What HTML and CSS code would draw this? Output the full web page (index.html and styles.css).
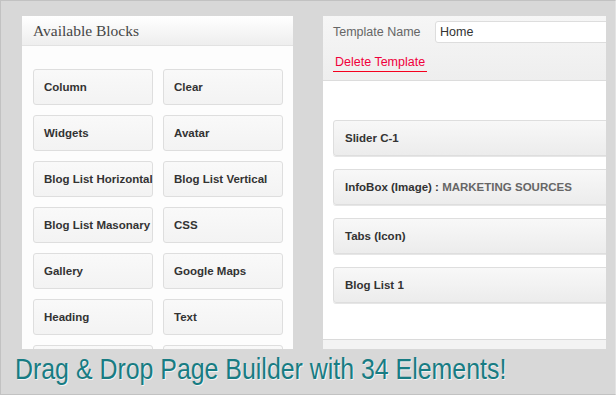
FILE: index.html
```html
<!DOCTYPE html>
<html lang="en">
<head>
  <meta charset="UTF-8">
  <title>Page Builder</title>
  <link rel="stylesheet" href="styles.css">
</head>
<body>
<div class="frame">
  <div class="panels">
    <!-- Available blocks -->
    <div class="blocks">
      <div class="blocks-head">Available Blocks</div>
      <div class="blocks-grid">
        <div class="block">Column</div>
        <div class="block">Clear</div>
        <div class="block">Widgets</div>
        <div class="block">Avatar</div>
        <div class="block">Blog List Horizontal</div>
        <div class="block">Blog List Vertical</div>
        <div class="block">Blog List Masonary</div>
        <div class="block">CSS</div>
        <div class="block">Gallery</div>
        <div class="block">Google Maps</div>
        <div class="block">Heading</div>
        <div class="block">Text</div>
        <div class="block"></div>
        <div class="block"></div>
      </div>
    </div>

    <!-- Template -->
    <div class="template">
      <div class="template-head">
        <div class="name-row">
          <label class="name-label">Template Name</label>
          <div class="name-input">Home</div>
        </div>
        <a class="delete-link">Delete Template</a>
      </div>
      <div class="template-body">
        <div class="row-item">Slider C-1</div>
        <div class="row-item">InfoBox (Image) : <span class="row-sub">MARKETING SOURCES</span></div>
        <div class="row-item">Tabs (Icon)</div>
        <div class="row-item">Blog List 1</div>
      </div>
      <div class="template-foot"></div>
    </div>
  </div>
  <div class="caption">Drag &amp; Drop Page Builder with 34 Elements!</div>
</div>
</body>
</html>
```

FILE: styles.css
```css
* {
  margin: 0;
  padding: 0;
  box-sizing: border-box;
}
body {
  width: 616px;
  height: 395px;
  overflow: hidden;
  font-family: 'Liberation Sans', Arial, sans-serif;
}
.frame {
  width: 616px;
  height: 395px;
  background: #d8d8d8;
  border: 1px solid #c2c2c2;
  border-right-color: #e4e4e4;
  padding: 15px 0 0 21px;
  overflow: hidden;
}
.panels {
  display: flex;
  gap: 30px;
  height: 333px;
}

/* Левая панель */
.blocks {
  width: 271px;
  background: #fdfdfd;
  overflow: hidden;
}
.blocks-head {
  height: 30px;
  padding: 6px 0 0 11px;
  background: linear-gradient(#ffffff, #eeeeee);
  border-bottom: 1px solid #e2e2e2;
  font-family: 'Liberation Serif', 'DejaVu Serif', serif;
  font-size: 15.5px;
  color: #464646;
}
.blocks-grid {
  display: grid;
  grid-template-columns: 120px 120px;
  gap: 10px;
  padding: 23px 0 0 11px;
}
.block {
  height: 36px;
  border: 1px solid #dedede;
  border-radius: 3px;
  background: linear-gradient(#f9f9f9, #f3f3f3);
  padding: 0 0 0 10px;
  display: flex;
  align-items: center;
  font-size: 11.5px;
  font-weight: bold;
  color: #333;
  white-space: nowrap;
}

/* Правая панель */
.template {
  width: 283px;
  overflow: hidden;
  display: flex;
  flex-direction: column;
}
.template-head {
  height: 65px;
  background: linear-gradient(#f6f6f6, #eeeeee);
  border-bottom: 1px solid #dcdcdc;
  padding: 5px 0 0 10px;
  width: 330px;
}
.name-row {
  display: flex;
  align-items: center;
}
.name-label {
  width: 103px;
  font-size: 12.5px;
  color: #666;
}
.name-input {
  width: 220px;
  height: 22px;
  background: #fff;
  border: 1px solid #dddddd;
  border-radius: 3px;
  padding: 0 0 0 4px;
  display: flex;
  align-items: center;
  font-size: 12.5px;
  color: #333;
}
.delete-link {
  display: inline-block;
  margin: 12px 0 0 0;
  padding: 0 2px 2px 2px;
  border-bottom: 1px solid #f5001e;
  font-size: 12.5px;
  color: #f0003c;
}
.template-body {
  flex: 1;
  background: #fff;
  padding: 39px 0 0 10px;
  display: flex;
  flex-direction: column;
  gap: 13px;
}
.row-item {
  width: 330px;
  height: 36px;
  border: 1px solid #dedede;
  border-radius: 3px;
  background: linear-gradient(#f8f8f8, #ececec);
  box-shadow: 0 1px 0 #e6e6e6;
  padding: 0 0 0 11px;
  display: flex;
  align-items: center;
  font-size: 11.5px;
  font-weight: bold;
  color: #333;
  white-space: pre;
}
.row-sub {
  color: #666;
}
.template-foot {
  height: 10px;
  background: #f3f3f3;
  border-top: 1px solid #dadada;
}

/* Подпись */
.caption {
  margin: 3px 0 0 -7px;
  font-size: 30px;
  color: #187c83;
  text-shadow: 1px 1px 0 #f4f4f4;
  white-space: nowrap;
  transform: scaleX(0.83);
  transform-origin: left;
}
```
